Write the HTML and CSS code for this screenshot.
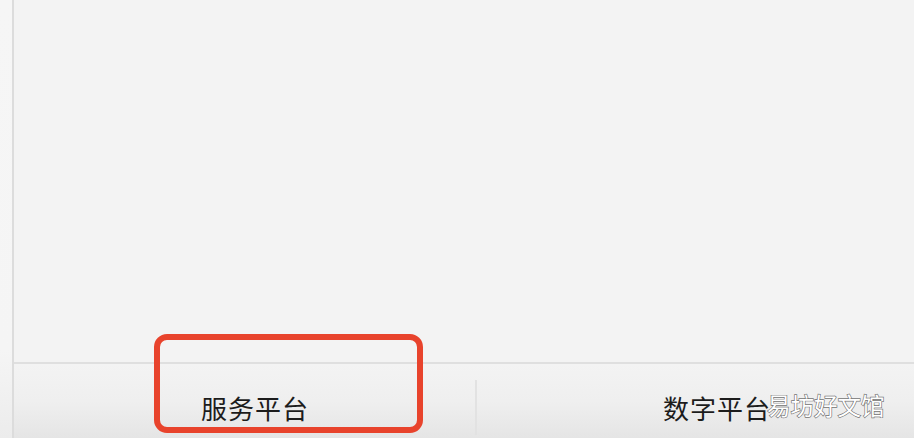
FILE: index.html
```html
<!DOCTYPE html>
<html lang="zh">
<head>
<meta charset="utf-8">
<link rel="stylesheet" href="styles.css">
</head>
<body>
<div class="page">
  <div class="strip"></div>
  <div class="vline"></div>
  <div class="main">
    <div class="content"></div>
    <div class="hline"></div>
    <div class="tabbar">
      <div class="tab tab-one"><span class="label">服务平台</span></div>
      <div class="divider"></div>
      <div class="tab tab-two"><span class="label">数字平台</span></div>
    </div>
  </div>
  <div class="highlight"></div>
  <div class="watermark">易坊好文馆</div>
</div>
</body>
</html>
```
FILE: styles.css
```css
html, body {
  margin: 0;
  padding: 0;
}
body {
  width: 914px;
  height: 438px;
  overflow: hidden;
  font-family: "Noto Sans CJK SC", "Noto Sans", sans-serif;
}
.page {
  position: relative;
  display: flex;
  width: 914px;
  height: 438px;
  background: #f2f2f2;
}
.strip {
  width: 12px;
  background: linear-gradient(to bottom, #f6f6f6 0%, #f5f5f5 80%, #ececec 100%);
}
.vline {
  width: 2px;
  background: #dcdcdc;
}
.main {
  flex: 1;
  display: flex;
  flex-direction: column;
}
.content {
  height: 362px;
  background: #f3f3f3;
}
.hline {
  height: 2px;
  background: #dfdfdf;
}
.tabbar {
  flex: 1;
  display: flex;
  align-items: stretch;
  background: linear-gradient(to bottom, #f3f3f3 0%, #efefef 50%, #e5e5e5 100%);
}
.tab {
  display: flex;
  align-items: flex-end;
  padding-bottom: 15px;
  box-sizing: border-box;
}
.tab-one {
  width: 461px;
  padding-left: 187px;
}
.tab-two {
  flex: 1;
  padding-left: 186px;
}
.divider {
  width: 2px;
  margin-top: 16px;
  margin-bottom: 3px;
  background: #e2e2e2;
}
.label {
  font-size: 26px;
  line-height: 30px;
  color: #1c1c1c;
  letter-spacing: 1px;
}
.highlight {
  position: absolute;
  left: 154px;
  top: 334px;
  width: 269px;
  height: 99px;
  box-sizing: border-box;
  border: 6px solid #e8432c;
  border-radius: 13px;
}
.watermark {
  position: absolute;
  left: 767px;
  top: 390px;
  font-size: 23.5px;
  line-height: 30px;
  color: #ffffff;
  -webkit-text-stroke: 1.3px #737373;
  paint-order: stroke fill;
}
```
